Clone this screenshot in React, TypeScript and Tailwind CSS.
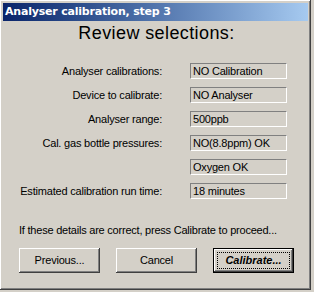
import React from "react";

const raised =
  "shadow-[inset_-1px_-1px_#404040,inset_1px_1px_#ffffff,inset_-2px_-2px_#808080,inset_2px_2px_#d4d0c8]";

function Field({ children }: { children: React.ReactNode }) {
  return (
    <div className="w-[97px] h-[16px] border-t border-l border-[#808080] border-b-white border-r-white border-b border-r pl-[2px] text-[11px] leading-[14px] text-black whitespace-nowrap overflow-hidden tracking-[-0.2px]">
      {children}
    </div>
  );
}

function Row({ label, value }: { label: string; value: string }) {
  return (
    <div className="flex items-center h-[16px]">
      <div className="w-[159px] text-right text-[11px] whitespace-nowrap tracking-[-0.2px]">{label}</div>
      <div className="ml-[28px]">
        <Field>{value}</Field>
      </div>
    </div>
  );
}

export default function App() {
  return (
    <div
      className="w-[314px] h-[292px] bg-[#d4d0c8] text-black"
      style={{ fontFamily: '"Liberation Sans", Arial, sans-serif' }}
    >
      <div className={`w-[311px] h-[290px] p-[3px] flex flex-col ${raised}`}>
        <div className="h-[18px] flex items-center pl-[2px] bg-gradient-to-r from-[#0a246a] to-[#a6caf0]">
          <span
            className="text-white font-bold text-[11px] tracking-[-0.2px]"
            style={{ fontFamily: '"DejaVu Sans", Verdana, sans-serif' }}
          >
            Analyser calibration, step 3
          </span>
        </div>
        <div className="text-center text-[18px] leading-[20px] mt-[2px] tracking-[0.4px] pl-[2px]">
          Review selections:
        </div>
        <div className="flex flex-col gap-[8px] mt-[20px]">
          <Row label="Analyser calibrations:" value="NO Calibration" />
          <Row label="Device to calibrate:" value="NO Analyser" />
          <Row label="Analyser range:" value="500ppb" />
          <Row label="Cal. gas bottle pressures:" value="NO(8.8ppm) OK" />
          <Row label="" value="Oxygen OK" />
          <Row label="Estimated calibration run time:" value="18 minutes" />
        </div>
        <div className="text-[11px] mt-[23px] pl-[16px] whitespace-nowrap tracking-[-0.22px]">
          If these details are correct, press Calibrate to proceed...
        </div>
        <div className="flex gap-[16px] pl-[16px] mt-[9px]">
          <button className={`w-[81px] h-[25px] text-[11px] tracking-[-0.2px] bg-[#d4d0c8] ${raised}`}>
            Previous...
          </button>
          <button className={`w-[81px] h-[25px] text-[11px] tracking-[-0.2px] bg-[#d4d0c8] ${raised}`}>
            Cancel
          </button>
          <button className="w-[81px] h-[25px] border border-black bg-[#d4d0c8] p-0">
            <div className="w-full h-full shadow-[inset_-1px_-1px_#404040,inset_1px_1px_#ffffff,inset_-2px_-2px_#808080] p-[3px]">
              <div className="w-full h-full border border-dotted border-black flex items-center justify-center text-[11px] font-bold italic">
                Calibrate...
              </div>
            </div>
          </button>
        </div>
      </div>
    </div>
  );
}
